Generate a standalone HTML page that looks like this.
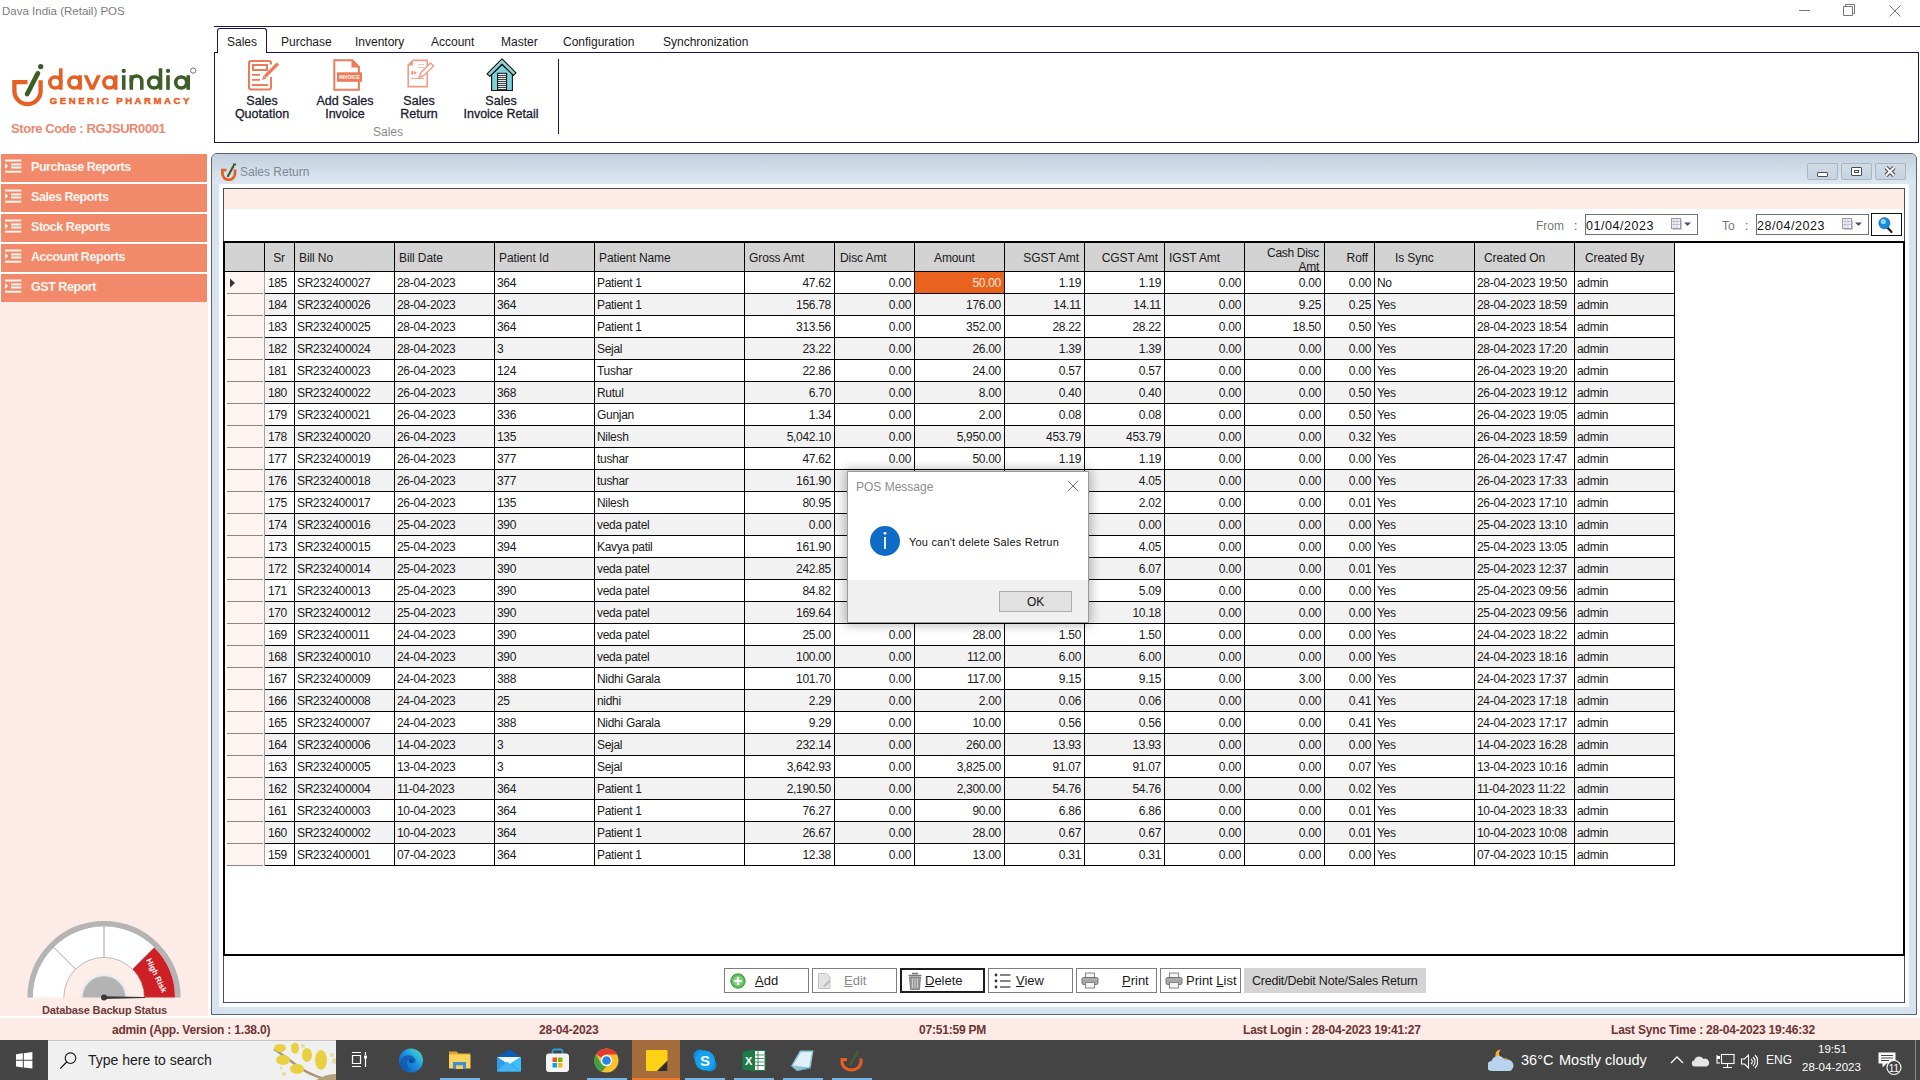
<!DOCTYPE html><html><head><meta charset="utf-8"><title>Dava India POS</title><style>*{margin:0;padding:0;box-sizing:border-box}
html,body{width:1920px;height:1080px;overflow:hidden;background:#fff;font-family:"Liberation Sans",sans-serif;color:#000;position:relative}
.a{position:absolute}
.t{position:absolute;white-space:nowrap;line-height:1;margin-left:-1px}
/* title bar */
#title{left:3px;top:6px;font-size:11.5px;color:#7c7c7c}
/* ribbon */
.nav{background:#16155a}
.tab{font-size:12px;color:#1a1a1a;top:36px}
.rbtxt{font-size:12.5px;color:#1b1b2e;text-align:center;line-height:13px;-webkit-text-stroke:0.3px #1b1b2e;letter-spacing:0px}
/* left menu */
.mbtn{left:1px;width:206px;height:28px;background:#f2896a}
.mbtn .lbl{position:absolute;left:30px;top:7px;font-size:12.5px;font-weight:bold;color:#fff6f0;white-space:nowrap;line-height:1;letter-spacing:-0.45px}
/* grid */
.g{position:absolute;margin-left:-1px;margin-right:-1px;font-size:12px;line-height:1;white-space:nowrap;color:#1a1a1a;letter-spacing:-0.3px}
</style></head><body>
<div class="t" id="title">Dava India (Retail) POS</div>
<div class="a" style="left:1799px;top:10px;width:11px;height:1px;background:#777"></div>
<svg class="a" style="left:1843px;top:4px" width="12" height="12" viewBox="0 0 12 12"><path d="M0.5 2.5h9v9h-9z M2.5 2.5v-2h9v9h-2" fill="none" stroke="#777" stroke-width="1"/></svg>
<svg class="a" style="left:1889px;top:5px" width="12" height="12" viewBox="0 0 12 12"><path d="M0.5 0.5L11.5 11.5M11.5 0.5L0.5 11.5" stroke="#777" stroke-width="1"/></svg>
<div class="a nav" style="left:214px;top:26px;width:1706px;height:1px"></div>
<div class="a" style="left:214px;top:52px;width:1705px;height:91px;border:1px solid #16155a;border-top:none"></div>
<div class="a nav" style="left:214px;top:52px;width:4px;height:1px"></div>
<div class="a nav" style="left:266px;top:52px;width:1653px;height:1px"></div>
<div class="a" style="left:217px;top:28px;width:50px;height:25px;border:1px solid #16155a;border-bottom:none;border-radius:3px 3px 0 0;background:#fff"></div>
<div class="t tab" style="left:228px">Sales</div>
<div class="t tab" style="left:282px">Purchase</div>
<div class="t tab" style="left:356px">Inventory</div>
<div class="t tab" style="left:432px">Account</div>
<div class="t tab" style="left:502px">Master</div>
<div class="t tab" style="left:564px">Configuration</div>
<div class="t tab" style="left:664px">Synchronization</div>
<div class="a nav" style="left:558px;top:59px;width:1px;height:75px"></div>
<div class="t" style="left:374px;top:126px;font-size:12px;color:#8a8a8a">Sales</div>
<svg class="a" style="left:244px;top:56px" width="40" height="38" viewBox="0 0 40 38">
<path d="M27 8.5V7a2 2 0 0 0-2-2H7a2 2 0 0 0-2 2v24.5a2 2 0 0 0 2 2h18a2 2 0 0 0 2-2V21" fill="none" stroke="#ee7b58" stroke-width="2"/>
<rect x="9" y="9" width="14" height="5" fill="none" stroke="#ee7b58" stroke-width="2"/>
<rect x="8" y="18" width="8" height="1.8" fill="#ee7b58"/><rect x="8" y="23" width="8" height="1.8" fill="#ee7b58"/><rect x="8" y="28" width="16" height="2" fill="#ee7b58"/>
<path d="M21 20.5L34 7.5" stroke="#ee7b58" stroke-width="3.2"/><path d="M18 24l1.5-4.5 3 3z" fill="#ee7b58"/>
</svg>
<svg class="a" style="left:328px;top:56px" width="40" height="38" viewBox="0 0 40 38">
<path d="M6.3 4.2H24.5L30.9 11V33.7H6.3Z" fill="none" stroke="#ee7b58" stroke-width="2"/>
<path d="M23.5 4 V11.5 H31.5Z" fill="#ee7b58"/>
<rect x="9" y="16.3" width="25" height="9.5" fill="#ee7b58"/>
<text x="11" y="23" font-size="5" font-family="Liberation Sans" font-weight="bold" fill="#fff" textLength="21" lengthAdjust="spacingAndGlyphs">INVOICE</text>
</svg>
<svg class="a" style="left:402px;top:56px" width="40" height="38" viewBox="0 0 40 38">
<path d="M25.2 17V30.6H6.2V9.2L11 4.4H25.2V9" fill="none" stroke="#f29a85" stroke-width="1.6"/>
<path d="M6.5 9.5H11V4.5Z" fill="#f29a85"/>
<path d="M17 21.5L19 16.5L28.5 7L31.5 10L22 19.5Z" fill="none" stroke="#f29a85" stroke-width="1.4"/>
<rect x="9.2" y="15" width="2.2" height="3.7" fill="#f29a85"/><path d="M12 15v3.7l3-1.85z" fill="#f29a85"/>
<rect x="9" y="21.8" width="13" height="1" fill="#f29a85"/>
<rect x="16" y="8" width="6" height="0.8" fill="#f29a85" opacity=".7"/><rect x="16" y="11" width="6" height="0.8" fill="#f29a85" opacity=".7"/>
</svg>
<svg class="a" style="left:482px;top:54px" width="40" height="40" viewBox="0 0 40 40">
<path d="M9.6 20.5V36.5H30.4V20L20 10.5Z" fill="#7fd0d8" stroke="#111" stroke-width="1.1"/>
<path d="M5 19.8L20 4.8L34 18.8L31.4 21.4L20 10.2L7.8 22.4Z" fill="#93d2d8" stroke="#111" stroke-width="1.1" stroke-linejoin="round"/>
<rect x="15.6" y="19.3" width="9" height="17" fill="#fff" stroke="#111" stroke-width="1"/>
<path d="M15.6 21.6H24.6M15.6 23.6H24.6M15.6 25.6H24.6M15.6 27.6H24.6M15.6 29.6H24.6M15.6 31.6H24.6M15.6 33.6H24.6M15.6 35.6H24.6" stroke="#111" stroke-width="0.9"/>
</svg>
<div class="a rbtxt" style="left:222px;top:95px;width:80px">Sales<br>Quotation</div>
<div class="a rbtxt" style="left:305px;top:95px;width:80px">Add Sales<br>Invoice</div>
<div class="a rbtxt" style="left:379px;top:95px;width:80px">Sales<br>Return</div>
<div class="a rbtxt" style="left:451px;top:95px;width:100px">Sales<br>Invoice Retail</div>
<svg class="a" style="left:0;top:55px" width="205" height="85" viewBox="0 55 205 85">
<g fill="none" stroke-width="3.6">
<path d="M12.3 82.1H27.5M14.4 80V91A13.1 13.1 0 0 0 40.6 91V80.3" stroke="#e65f25" stroke-width="4.3"/>
<path d="M27.2 94L37.8 73.4" stroke="#3e5e28" stroke-width="4.8" stroke-linecap="round"/>
<circle cx="55.3" cy="82.5" r="5.5" stroke="#e65f25"/><path d="M60.8 68.3V89.8" stroke="#e65f25"/>
<circle cx="74.4" cy="82.5" r="5.5" stroke="#e65f25"/><path d="M80.1 75.2V89.8" stroke="#e65f25"/>
<circle cx="109.4" cy="82.5" r="5.5" stroke="#e65f25"/><path d="M115.7 75.2V89.8" stroke="#e65f25"/>
<path d="M123.75 75.2V89.8" stroke="#3e5e28"/>
<path d="M131.3 89.8V81.2A5.25 5.25 0 0 1 141.8 81.2V89.8" stroke="#3e5e28"/><path d="M131.3 75.2V82" stroke="#3e5e28"/>
<circle cx="154.1" cy="82.5" r="5.5" stroke="#3e5e28"/><path d="M160.5 68.3V89.8" stroke="#3e5e28"/>
<path d="M168 75.2V89.8" stroke="#3e5e28"/>
<circle cx="181.2" cy="82.5" r="5.5" stroke="#3e5e28"/><path d="M188.2 75.2V89.8" stroke="#3e5e28"/>
<circle cx="193.2" cy="70.6" r="2.6" stroke="#555" stroke-width="0.8"/>
</g>
<path d="M83.6 75.2H87.6L92.2 85.6L96.8 75.2H100.8L94.2 89.8H90.2Z" fill="#e65f25"/>
<circle cx="40.7" cy="66.6" r="2.7" fill="#3e5e28"/>
<circle cx="123.75" cy="70.9" r="2.1" fill="#3e5e28"/><circle cx="168" cy="70.9" r="2.1" fill="#3e5e28"/>
<text x="49.8" y="103.6" font-family="Liberation Sans" font-weight="bold" font-size="9.6" fill="#e65f25" stroke="#e65f25" stroke-width="0.45" textLength="139.5" lengthAdjust="spacing">GENERIC PHARMACY</text>
</svg>
<div class="t" style="left:12px;top:122px;font-size:13px;font-weight:bold;color:#ea8870;letter-spacing:-0.42px">Store Code : RGJSUR0001</div>
<div class="a" style="left:0;top:302px;width:208px;height:714px;background:#fdebe7"></div>
<div class="a mbtn" style="top:154px"><svg class="a" style="left:2px;top:5px" width="20" height="15" viewBox="0 0 20 15"><g fill="#fff4ee"><rect x="2" y="0.5" width="16.3" height="2"/><rect x="8" y="4.4" width="10.3" height="2"/><rect x="8" y="7.5" width="10.3" height="2"/><rect x="2" y="11.7" width="16.3" height="2"/><path d="M2 4L5.2 7 2 10z"/></g></svg><div class="lbl">Purchase Reports</div></div>
<div class="a mbtn" style="top:184px"><svg class="a" style="left:2px;top:5px" width="20" height="15" viewBox="0 0 20 15"><g fill="#fff4ee"><rect x="2" y="0.5" width="16.3" height="2"/><rect x="8" y="4.4" width="10.3" height="2"/><rect x="8" y="7.5" width="10.3" height="2"/><rect x="2" y="11.7" width="16.3" height="2"/><path d="M2 4L5.2 7 2 10z"/></g></svg><div class="lbl">Sales Reports</div></div>
<div class="a mbtn" style="top:214px"><svg class="a" style="left:2px;top:5px" width="20" height="15" viewBox="0 0 20 15"><g fill="#fff4ee"><rect x="2" y="0.5" width="16.3" height="2"/><rect x="8" y="4.4" width="10.3" height="2"/><rect x="8" y="7.5" width="10.3" height="2"/><rect x="2" y="11.7" width="16.3" height="2"/><path d="M2 4L5.2 7 2 10z"/></g></svg><div class="lbl">Stock Reports</div></div>
<div class="a mbtn" style="top:244px"><svg class="a" style="left:2px;top:5px" width="20" height="15" viewBox="0 0 20 15"><g fill="#fff4ee"><rect x="2" y="0.5" width="16.3" height="2"/><rect x="8" y="4.4" width="10.3" height="2"/><rect x="8" y="7.5" width="10.3" height="2"/><rect x="2" y="11.7" width="16.3" height="2"/><path d="M2 4L5.2 7 2 10z"/></g></svg><div class="lbl">Account Reports</div></div>
<div class="a mbtn" style="top:274px"><svg class="a" style="left:2px;top:5px" width="20" height="15" viewBox="0 0 20 15"><g fill="#fff4ee"><rect x="2" y="0.5" width="16.3" height="2"/><rect x="8" y="4.4" width="10.3" height="2"/><rect x="8" y="7.5" width="10.3" height="2"/><rect x="2" y="11.7" width="16.3" height="2"/><path d="M2 4L5.2 7 2 10z"/></g></svg><div class="lbl">GST Report</div></div>
<div class="a" style="left:211px;top:153px;width:1706px;height:862px;border:1px solid #5d6268;border-radius:6px 6px 0 0;background:#d7e3ef"></div>
<div class="a" style="left:212px;top:154px;width:1704px;height:30px;border-radius:5px 5px 0 0;background:linear-gradient(#c3cfdc,#d3dfeb 60%,#dbe6f1)"></div>
<div class="a" style="left:219px;top:184px;width:1690px;height:823px;background:#fbfdff"></div>
<svg class="a" style="left:219px;top:161px" width="20" height="20" viewBox="0 0 20 20">
<path d="M2 9.2H7.5M3.4 8.5V12.5A6.3 6.3 0 0 0 16 12.5V8.5" fill="none" stroke="#e65f25" stroke-width="2.8"/>
<path d="M9 15L14.5 5" stroke="#3e5e28" stroke-width="2.2" stroke-linecap="round"/><rect x="14" y="2.5" width="3" height="2" fill="#3e5e28"/>
</svg>
<div class="t" style="left:241px;top:166px;font-size:12px;color:#7d8894">Sales Return</div>
<div class="a" style="left:1807px;top:163px;width:31px;height:17px;border:1px solid #a9b6c4;border-radius:2px;background:linear-gradient(#d0dbe6,#c6d3df)"></div>
<div class="a" style="left:1841px;top:163px;width:31px;height:17px;border:1px solid #a9b6c4;border-radius:2px;background:linear-gradient(#d0dbe6,#c6d3df)"></div>
<div class="a" style="left:1875px;top:163px;width:31px;height:17px;border:1px solid #a9b6c4;border-radius:2px;background:linear-gradient(#d0dbe6,#c6d3df)"></div>
<div class="a" style="left:1817px;top:172px;width:11px;height:5px;border:1px solid #4a4f55;border-radius:1px;background:#fff"></div>
<div class="a" style="left:1851px;top:167px;width:11px;height:9px;border:1px solid #4a4f55;border-radius:1px;background:#fff"><div class="a" style="left:2px;top:2px;width:5px;height:3px;border:1px solid #4a4f55;background:#fff"></div></div>
<svg class="a" style="left:1884px;top:166px" width="12" height="11" viewBox="0 0 12 11"><path d="M2 1.5L10 9.5M10 1.5L2 9.5" stroke="#4a4f55" stroke-width="4.2"/><path d="M2 1.5L10 9.5M10 1.5L2 9.5" stroke="#fff" stroke-width="2"/></svg>
<div class="a" style="left:223px;top:188px;width:1682px;height:815px;border:1px solid #4e4e4e;background:#fff"></div>
<div class="a" style="left:224px;top:189px;width:1680px;height:20px;background:#fdebe7"></div>
<div class="t" style="left:1537px;top:220px;font-size:12px;color:#777">From</div>
<div class="t" style="left:1575px;top:220px;font-size:12px;color:#555">:</div>
<div class="t" style="left:1723px;top:220px;font-size:12px;color:#777">To</div>
<div class="t" style="left:1746px;top:220px;font-size:12px;color:#555">:</div>
<div class="a" style="left:1585px;top:214px;width:113px;height:21px;border:1px solid #707070;background:#fff"></div>
<div class="t" style="left:1587px;top:220px;font-size:12.5px;color:#111;letter-spacing:0.55px">01/04/2023</div>
<svg class="a" style="left:1671px;top:217px" width="24" height="14" viewBox="0 0 24 14"><rect x="0.5" y="1.5" width="9" height="10" fill="#f4f4f8" stroke="#9a9aa8"/><path d="M3 2v9M6 2v9M1 4.5h8M1 7.5h8" stroke="#b8b8c6" stroke-width="0.8"/><path d="M2 12.5h8.5V3" fill="none" stroke="#c9c9d2"/><path d="M13 5.5h7l-3.5 3.5z" fill="#46556a"/></svg>
<div class="a" style="left:1756px;top:214px;width:113px;height:21px;border:1px solid #707070;background:#fff"></div>
<div class="t" style="left:1758px;top:220px;font-size:12.5px;color:#111;letter-spacing:0.55px">28/04/2023</div>
<svg class="a" style="left:1842px;top:217px" width="24" height="14" viewBox="0 0 24 14"><rect x="0.5" y="1.5" width="9" height="10" fill="#f4f4f8" stroke="#9a9aa8"/><path d="M3 2v9M6 2v9M1 4.5h8M1 7.5h8" stroke="#b8b8c6" stroke-width="0.8"/><path d="M2 12.5h8.5V3" fill="none" stroke="#c9c9d2"/><path d="M13 5.5h7l-3.5 3.5z" fill="#46556a"/></svg>
<div class="a" style="left:1871px;top:213px;width:31px;height:23px;border:1px solid #111;background:#fff"></div>
<svg class="a" style="left:1876px;top:216px" width="20" height="18" viewBox="0 0 20 18"><path d="M10 10L15.5 16" stroke="#222" stroke-width="2.2" stroke-linecap="round"/><circle cx="8.4" cy="7.2" r="5.6" fill="#1a8ad8"/><circle cx="7.3" cy="5.6" r="2.6" fill="#8fd3ff"/><circle cx="8.4" cy="7.2" r="5.6" fill="none" stroke="#0b5ea8" stroke-width="0.6"/></svg>
<div class="a" style="left:223px;top:241px;width:1682px;height:715px;border:2px solid #000;background:#fff"></div>
<div class="a" style="left:225px;top:243px;width:1449px;height:28px;background:#d3d3d3"></div>
<div class="a" style="left:225px;top:271px;width:1450px;height:1px;background:#000"></div>
<div class="a" style="left:225px;top:272px;width:39px;height:594px;background:#fdf4f1"></div>
<div class="a" style="left:265px;top:294px;width:1409px;height:21px;background:#f2f2f2"></div>
<div class="a" style="left:265px;top:338px;width:1409px;height:21px;background:#f2f2f2"></div>
<div class="a" style="left:265px;top:382px;width:1409px;height:21px;background:#f2f2f2"></div>
<div class="a" style="left:265px;top:426px;width:1409px;height:21px;background:#f2f2f2"></div>
<div class="a" style="left:265px;top:470px;width:1409px;height:21px;background:#f2f2f2"></div>
<div class="a" style="left:265px;top:514px;width:1409px;height:21px;background:#f2f2f2"></div>
<div class="a" style="left:265px;top:558px;width:1409px;height:21px;background:#f2f2f2"></div>
<div class="a" style="left:265px;top:602px;width:1409px;height:21px;background:#f2f2f2"></div>
<div class="a" style="left:265px;top:646px;width:1409px;height:21px;background:#f2f2f2"></div>
<div class="a" style="left:265px;top:690px;width:1409px;height:21px;background:#f2f2f2"></div>
<div class="a" style="left:265px;top:734px;width:1409px;height:21px;background:#f2f2f2"></div>
<div class="a" style="left:265px;top:778px;width:1409px;height:21px;background:#f2f2f2"></div>
<div class="a" style="left:265px;top:822px;width:1409px;height:21px;background:#f2f2f2"></div>
<div class="a" style="left:915px;top:272px;width:89px;height:21px;background:#e9631f"></div>
<div class="a" style="left:264px;top:293px;width:1411px;height:1px;background:#000"></div>
<div class="a" style="left:227px;top:293px;width:36px;height:1px;background:#8f8585"></div>
<div class="a" style="left:264px;top:315px;width:1411px;height:1px;background:#000"></div>
<div class="a" style="left:227px;top:315px;width:36px;height:1px;background:#8f8585"></div>
<div class="a" style="left:264px;top:337px;width:1411px;height:1px;background:#000"></div>
<div class="a" style="left:227px;top:337px;width:36px;height:1px;background:#8f8585"></div>
<div class="a" style="left:264px;top:359px;width:1411px;height:1px;background:#000"></div>
<div class="a" style="left:227px;top:359px;width:36px;height:1px;background:#8f8585"></div>
<div class="a" style="left:264px;top:381px;width:1411px;height:1px;background:#000"></div>
<div class="a" style="left:227px;top:381px;width:36px;height:1px;background:#8f8585"></div>
<div class="a" style="left:264px;top:403px;width:1411px;height:1px;background:#000"></div>
<div class="a" style="left:227px;top:403px;width:36px;height:1px;background:#8f8585"></div>
<div class="a" style="left:264px;top:425px;width:1411px;height:1px;background:#000"></div>
<div class="a" style="left:227px;top:425px;width:36px;height:1px;background:#8f8585"></div>
<div class="a" style="left:264px;top:447px;width:1411px;height:1px;background:#000"></div>
<div class="a" style="left:227px;top:447px;width:36px;height:1px;background:#8f8585"></div>
<div class="a" style="left:264px;top:469px;width:1411px;height:1px;background:#000"></div>
<div class="a" style="left:227px;top:469px;width:36px;height:1px;background:#8f8585"></div>
<div class="a" style="left:264px;top:491px;width:1411px;height:1px;background:#000"></div>
<div class="a" style="left:227px;top:491px;width:36px;height:1px;background:#8f8585"></div>
<div class="a" style="left:264px;top:513px;width:1411px;height:1px;background:#000"></div>
<div class="a" style="left:227px;top:513px;width:36px;height:1px;background:#8f8585"></div>
<div class="a" style="left:264px;top:535px;width:1411px;height:1px;background:#000"></div>
<div class="a" style="left:227px;top:535px;width:36px;height:1px;background:#8f8585"></div>
<div class="a" style="left:264px;top:557px;width:1411px;height:1px;background:#000"></div>
<div class="a" style="left:227px;top:557px;width:36px;height:1px;background:#8f8585"></div>
<div class="a" style="left:264px;top:579px;width:1411px;height:1px;background:#000"></div>
<div class="a" style="left:227px;top:579px;width:36px;height:1px;background:#8f8585"></div>
<div class="a" style="left:264px;top:601px;width:1411px;height:1px;background:#000"></div>
<div class="a" style="left:227px;top:601px;width:36px;height:1px;background:#8f8585"></div>
<div class="a" style="left:264px;top:623px;width:1411px;height:1px;background:#000"></div>
<div class="a" style="left:227px;top:623px;width:36px;height:1px;background:#8f8585"></div>
<div class="a" style="left:264px;top:645px;width:1411px;height:1px;background:#000"></div>
<div class="a" style="left:227px;top:645px;width:36px;height:1px;background:#8f8585"></div>
<div class="a" style="left:264px;top:667px;width:1411px;height:1px;background:#000"></div>
<div class="a" style="left:227px;top:667px;width:36px;height:1px;background:#8f8585"></div>
<div class="a" style="left:264px;top:689px;width:1411px;height:1px;background:#000"></div>
<div class="a" style="left:227px;top:689px;width:36px;height:1px;background:#8f8585"></div>
<div class="a" style="left:264px;top:711px;width:1411px;height:1px;background:#000"></div>
<div class="a" style="left:227px;top:711px;width:36px;height:1px;background:#8f8585"></div>
<div class="a" style="left:264px;top:733px;width:1411px;height:1px;background:#000"></div>
<div class="a" style="left:227px;top:733px;width:36px;height:1px;background:#8f8585"></div>
<div class="a" style="left:264px;top:755px;width:1411px;height:1px;background:#000"></div>
<div class="a" style="left:227px;top:755px;width:36px;height:1px;background:#8f8585"></div>
<div class="a" style="left:264px;top:777px;width:1411px;height:1px;background:#000"></div>
<div class="a" style="left:227px;top:777px;width:36px;height:1px;background:#8f8585"></div>
<div class="a" style="left:264px;top:799px;width:1411px;height:1px;background:#000"></div>
<div class="a" style="left:227px;top:799px;width:36px;height:1px;background:#8f8585"></div>
<div class="a" style="left:264px;top:821px;width:1411px;height:1px;background:#000"></div>
<div class="a" style="left:227px;top:821px;width:36px;height:1px;background:#8f8585"></div>
<div class="a" style="left:264px;top:843px;width:1411px;height:1px;background:#000"></div>
<div class="a" style="left:227px;top:843px;width:36px;height:1px;background:#8f8585"></div>
<div class="a" style="left:264px;top:865px;width:1411px;height:1px;background:#000"></div>
<div class="a" style="left:227px;top:865px;width:36px;height:1px;background:#8f8585"></div>
<div class="a" style="left:264px;top:243px;width:1px;height:28px;background:#000"></div>
<div class="a" style="left:264px;top:272px;width:1px;height:594px;background:#a8a0a0"></div>
<div class="a" style="left:294px;top:243px;width:1px;height:623px;background:#000"></div>
<div class="a" style="left:394px;top:243px;width:1px;height:623px;background:#000"></div>
<div class="a" style="left:494px;top:243px;width:1px;height:623px;background:#000"></div>
<div class="a" style="left:594px;top:243px;width:1px;height:623px;background:#000"></div>
<div class="a" style="left:744px;top:243px;width:1px;height:623px;background:#000"></div>
<div class="a" style="left:834px;top:243px;width:1px;height:623px;background:#000"></div>
<div class="a" style="left:914px;top:243px;width:1px;height:623px;background:#000"></div>
<div class="a" style="left:1004px;top:243px;width:1px;height:623px;background:#000"></div>
<div class="a" style="left:1084px;top:243px;width:1px;height:623px;background:#000"></div>
<div class="a" style="left:1164px;top:243px;width:1px;height:623px;background:#000"></div>
<div class="a" style="left:1244px;top:243px;width:1px;height:623px;background:#000"></div>
<div class="a" style="left:1324px;top:243px;width:1px;height:623px;background:#000"></div>
<div class="a" style="left:1374px;top:243px;width:1px;height:623px;background:#000"></div>
<div class="a" style="left:1474px;top:243px;width:1px;height:623px;background:#000"></div>
<div class="a" style="left:1574px;top:243px;width:1px;height:623px;background:#000"></div>
<div class="a" style="left:1674px;top:243px;width:1px;height:623px;background:#000"></div>
<svg class="a" style="left:229px;top:277px" width="8" height="12" viewBox="0 0 8 12"><path d="M1 1.5L6 6 1 10.5z" fill="#333"/></svg>
<div class="g" style="right:1634px;top:277px;color:#1a1a1a">185</div>
<div class="g" style="left:298px;top:277px">SR232400027</div>
<div class="g" style="left:398px;top:277px">28-04-2023</div>
<div class="g" style="left:498px;top:277px">364</div>
<div class="g" style="left:598px;top:277px">Patient 1</div>
<div class="g" style="right:1090px;top:277px;color:#1a1a1a">47.62</div>
<div class="g" style="right:1010px;top:277px;color:#1a1a1a">0.00</div>
<div class="g" style="right:920px;top:277px;color:#fde6d6">50.00</div>
<div class="g" style="right:840px;top:277px;color:#1a1a1a">1.19</div>
<div class="g" style="right:760px;top:277px;color:#1a1a1a">1.19</div>
<div class="g" style="right:680px;top:277px;color:#1a1a1a">0.00</div>
<div class="g" style="right:600px;top:277px;color:#1a1a1a">0.00</div>
<div class="g" style="right:550px;top:277px;color:#1a1a1a">0.00</div>
<div class="g" style="left:1378px;top:277px">No</div>
<div class="g" style="left:1478px;top:277px">28-04-2023 19:50</div>
<div class="g" style="left:1578px;top:277px">admin</div>
<div class="g" style="right:1634px;top:299px;color:#1a1a1a">184</div>
<div class="g" style="left:298px;top:299px">SR232400026</div>
<div class="g" style="left:398px;top:299px">28-04-2023</div>
<div class="g" style="left:498px;top:299px">364</div>
<div class="g" style="left:598px;top:299px">Patient 1</div>
<div class="g" style="right:1090px;top:299px;color:#1a1a1a">156.78</div>
<div class="g" style="right:1010px;top:299px;color:#1a1a1a">0.00</div>
<div class="g" style="right:920px;top:299px;color:#1a1a1a">176.00</div>
<div class="g" style="right:840px;top:299px;color:#1a1a1a">14.11</div>
<div class="g" style="right:760px;top:299px;color:#1a1a1a">14.11</div>
<div class="g" style="right:680px;top:299px;color:#1a1a1a">0.00</div>
<div class="g" style="right:600px;top:299px;color:#1a1a1a">9.25</div>
<div class="g" style="right:550px;top:299px;color:#1a1a1a">0.25</div>
<div class="g" style="left:1378px;top:299px">Yes</div>
<div class="g" style="left:1478px;top:299px">28-04-2023 18:59</div>
<div class="g" style="left:1578px;top:299px">admin</div>
<div class="g" style="right:1634px;top:321px;color:#1a1a1a">183</div>
<div class="g" style="left:298px;top:321px">SR232400025</div>
<div class="g" style="left:398px;top:321px">28-04-2023</div>
<div class="g" style="left:498px;top:321px">364</div>
<div class="g" style="left:598px;top:321px">Patient 1</div>
<div class="g" style="right:1090px;top:321px;color:#1a1a1a">313.56</div>
<div class="g" style="right:1010px;top:321px;color:#1a1a1a">0.00</div>
<div class="g" style="right:920px;top:321px;color:#1a1a1a">352.00</div>
<div class="g" style="right:840px;top:321px;color:#1a1a1a">28.22</div>
<div class="g" style="right:760px;top:321px;color:#1a1a1a">28.22</div>
<div class="g" style="right:680px;top:321px;color:#1a1a1a">0.00</div>
<div class="g" style="right:600px;top:321px;color:#1a1a1a">18.50</div>
<div class="g" style="right:550px;top:321px;color:#1a1a1a">0.50</div>
<div class="g" style="left:1378px;top:321px">Yes</div>
<div class="g" style="left:1478px;top:321px">28-04-2023 18:54</div>
<div class="g" style="left:1578px;top:321px">admin</div>
<div class="g" style="right:1634px;top:343px;color:#1a1a1a">182</div>
<div class="g" style="left:298px;top:343px">SR232400024</div>
<div class="g" style="left:398px;top:343px">28-04-2023</div>
<div class="g" style="left:498px;top:343px">3</div>
<div class="g" style="left:598px;top:343px">Sejal</div>
<div class="g" style="right:1090px;top:343px;color:#1a1a1a">23.22</div>
<div class="g" style="right:1010px;top:343px;color:#1a1a1a">0.00</div>
<div class="g" style="right:920px;top:343px;color:#1a1a1a">26.00</div>
<div class="g" style="right:840px;top:343px;color:#1a1a1a">1.39</div>
<div class="g" style="right:760px;top:343px;color:#1a1a1a">1.39</div>
<div class="g" style="right:680px;top:343px;color:#1a1a1a">0.00</div>
<div class="g" style="right:600px;top:343px;color:#1a1a1a">0.00</div>
<div class="g" style="right:550px;top:343px;color:#1a1a1a">0.00</div>
<div class="g" style="left:1378px;top:343px">Yes</div>
<div class="g" style="left:1478px;top:343px">28-04-2023 17:20</div>
<div class="g" style="left:1578px;top:343px">admin</div>
<div class="g" style="right:1634px;top:365px;color:#1a1a1a">181</div>
<div class="g" style="left:298px;top:365px">SR232400023</div>
<div class="g" style="left:398px;top:365px">26-04-2023</div>
<div class="g" style="left:498px;top:365px">124</div>
<div class="g" style="left:598px;top:365px">Tushar</div>
<div class="g" style="right:1090px;top:365px;color:#1a1a1a">22.86</div>
<div class="g" style="right:1010px;top:365px;color:#1a1a1a">0.00</div>
<div class="g" style="right:920px;top:365px;color:#1a1a1a">24.00</div>
<div class="g" style="right:840px;top:365px;color:#1a1a1a">0.57</div>
<div class="g" style="right:760px;top:365px;color:#1a1a1a">0.57</div>
<div class="g" style="right:680px;top:365px;color:#1a1a1a">0.00</div>
<div class="g" style="right:600px;top:365px;color:#1a1a1a">0.00</div>
<div class="g" style="right:550px;top:365px;color:#1a1a1a">0.00</div>
<div class="g" style="left:1378px;top:365px">Yes</div>
<div class="g" style="left:1478px;top:365px">26-04-2023 19:20</div>
<div class="g" style="left:1578px;top:365px">admin</div>
<div class="g" style="right:1634px;top:387px;color:#1a1a1a">180</div>
<div class="g" style="left:298px;top:387px">SR232400022</div>
<div class="g" style="left:398px;top:387px">26-04-2023</div>
<div class="g" style="left:498px;top:387px">368</div>
<div class="g" style="left:598px;top:387px">Rutul</div>
<div class="g" style="right:1090px;top:387px;color:#1a1a1a">6.70</div>
<div class="g" style="right:1010px;top:387px;color:#1a1a1a">0.00</div>
<div class="g" style="right:920px;top:387px;color:#1a1a1a">8.00</div>
<div class="g" style="right:840px;top:387px;color:#1a1a1a">0.40</div>
<div class="g" style="right:760px;top:387px;color:#1a1a1a">0.40</div>
<div class="g" style="right:680px;top:387px;color:#1a1a1a">0.00</div>
<div class="g" style="right:600px;top:387px;color:#1a1a1a">0.00</div>
<div class="g" style="right:550px;top:387px;color:#1a1a1a">0.50</div>
<div class="g" style="left:1378px;top:387px">Yes</div>
<div class="g" style="left:1478px;top:387px">26-04-2023 19:12</div>
<div class="g" style="left:1578px;top:387px">admin</div>
<div class="g" style="right:1634px;top:409px;color:#1a1a1a">179</div>
<div class="g" style="left:298px;top:409px">SR232400021</div>
<div class="g" style="left:398px;top:409px">26-04-2023</div>
<div class="g" style="left:498px;top:409px">336</div>
<div class="g" style="left:598px;top:409px">Gunjan</div>
<div class="g" style="right:1090px;top:409px;color:#1a1a1a">1.34</div>
<div class="g" style="right:1010px;top:409px;color:#1a1a1a">0.00</div>
<div class="g" style="right:920px;top:409px;color:#1a1a1a">2.00</div>
<div class="g" style="right:840px;top:409px;color:#1a1a1a">0.08</div>
<div class="g" style="right:760px;top:409px;color:#1a1a1a">0.08</div>
<div class="g" style="right:680px;top:409px;color:#1a1a1a">0.00</div>
<div class="g" style="right:600px;top:409px;color:#1a1a1a">0.00</div>
<div class="g" style="right:550px;top:409px;color:#1a1a1a">0.50</div>
<div class="g" style="left:1378px;top:409px">Yes</div>
<div class="g" style="left:1478px;top:409px">26-04-2023 19:05</div>
<div class="g" style="left:1578px;top:409px">admin</div>
<div class="g" style="right:1634px;top:431px;color:#1a1a1a">178</div>
<div class="g" style="left:298px;top:431px">SR232400020</div>
<div class="g" style="left:398px;top:431px">26-04-2023</div>
<div class="g" style="left:498px;top:431px">135</div>
<div class="g" style="left:598px;top:431px">Nilesh</div>
<div class="g" style="right:1090px;top:431px;color:#1a1a1a">5,042.10</div>
<div class="g" style="right:1010px;top:431px;color:#1a1a1a">0.00</div>
<div class="g" style="right:920px;top:431px;color:#1a1a1a">5,950.00</div>
<div class="g" style="right:840px;top:431px;color:#1a1a1a">453.79</div>
<div class="g" style="right:760px;top:431px;color:#1a1a1a">453.79</div>
<div class="g" style="right:680px;top:431px;color:#1a1a1a">0.00</div>
<div class="g" style="right:600px;top:431px;color:#1a1a1a">0.00</div>
<div class="g" style="right:550px;top:431px;color:#1a1a1a">0.32</div>
<div class="g" style="left:1378px;top:431px">Yes</div>
<div class="g" style="left:1478px;top:431px">26-04-2023 18:59</div>
<div class="g" style="left:1578px;top:431px">admin</div>
<div class="g" style="right:1634px;top:453px;color:#1a1a1a">177</div>
<div class="g" style="left:298px;top:453px">SR232400019</div>
<div class="g" style="left:398px;top:453px">26-04-2023</div>
<div class="g" style="left:498px;top:453px">377</div>
<div class="g" style="left:598px;top:453px">tushar</div>
<div class="g" style="right:1090px;top:453px;color:#1a1a1a">47.62</div>
<div class="g" style="right:1010px;top:453px;color:#1a1a1a">0.00</div>
<div class="g" style="right:920px;top:453px;color:#1a1a1a">50.00</div>
<div class="g" style="right:840px;top:453px;color:#1a1a1a">1.19</div>
<div class="g" style="right:760px;top:453px;color:#1a1a1a">1.19</div>
<div class="g" style="right:680px;top:453px;color:#1a1a1a">0.00</div>
<div class="g" style="right:600px;top:453px;color:#1a1a1a">0.00</div>
<div class="g" style="right:550px;top:453px;color:#1a1a1a">0.00</div>
<div class="g" style="left:1378px;top:453px">Yes</div>
<div class="g" style="left:1478px;top:453px">26-04-2023 17:47</div>
<div class="g" style="left:1578px;top:453px">admin</div>
<div class="g" style="right:1634px;top:475px;color:#1a1a1a">176</div>
<div class="g" style="left:298px;top:475px">SR232400018</div>
<div class="g" style="left:398px;top:475px">26-04-2023</div>
<div class="g" style="left:498px;top:475px">377</div>
<div class="g" style="left:598px;top:475px">tushar</div>
<div class="g" style="right:1090px;top:475px;color:#1a1a1a">161.90</div>
<div class="g" style="right:1010px;top:475px;color:#1a1a1a">0.00</div>
<div class="g" style="right:920px;top:475px;color:#1a1a1a">170.00</div>
<div class="g" style="right:840px;top:475px;color:#1a1a1a">4.05</div>
<div class="g" style="right:760px;top:475px;color:#1a1a1a">4.05</div>
<div class="g" style="right:680px;top:475px;color:#1a1a1a">0.00</div>
<div class="g" style="right:600px;top:475px;color:#1a1a1a">0.00</div>
<div class="g" style="right:550px;top:475px;color:#1a1a1a">0.00</div>
<div class="g" style="left:1378px;top:475px">Yes</div>
<div class="g" style="left:1478px;top:475px">26-04-2023 17:33</div>
<div class="g" style="left:1578px;top:475px">admin</div>
<div class="g" style="right:1634px;top:497px;color:#1a1a1a">175</div>
<div class="g" style="left:298px;top:497px">SR232400017</div>
<div class="g" style="left:398px;top:497px">26-04-2023</div>
<div class="g" style="left:498px;top:497px">135</div>
<div class="g" style="left:598px;top:497px">Nilesh</div>
<div class="g" style="right:1090px;top:497px;color:#1a1a1a">80.95</div>
<div class="g" style="right:1010px;top:497px;color:#1a1a1a">0.00</div>
<div class="g" style="right:920px;top:497px;color:#1a1a1a">85.00</div>
<div class="g" style="right:840px;top:497px;color:#1a1a1a">2.02</div>
<div class="g" style="right:760px;top:497px;color:#1a1a1a">2.02</div>
<div class="g" style="right:680px;top:497px;color:#1a1a1a">0.00</div>
<div class="g" style="right:600px;top:497px;color:#1a1a1a">0.00</div>
<div class="g" style="right:550px;top:497px;color:#1a1a1a">0.01</div>
<div class="g" style="left:1378px;top:497px">Yes</div>
<div class="g" style="left:1478px;top:497px">26-04-2023 17:10</div>
<div class="g" style="left:1578px;top:497px">admin</div>
<div class="g" style="right:1634px;top:519px;color:#1a1a1a">174</div>
<div class="g" style="left:298px;top:519px">SR232400016</div>
<div class="g" style="left:398px;top:519px">25-04-2023</div>
<div class="g" style="left:498px;top:519px">390</div>
<div class="g" style="left:598px;top:519px">veda patel</div>
<div class="g" style="right:1090px;top:519px;color:#1a1a1a">0.00</div>
<div class="g" style="right:1010px;top:519px;color:#1a1a1a">0.00</div>
<div class="g" style="right:920px;top:519px;color:#1a1a1a">0.00</div>
<div class="g" style="right:840px;top:519px;color:#1a1a1a">0.00</div>
<div class="g" style="right:760px;top:519px;color:#1a1a1a">0.00</div>
<div class="g" style="right:680px;top:519px;color:#1a1a1a">0.00</div>
<div class="g" style="right:600px;top:519px;color:#1a1a1a">0.00</div>
<div class="g" style="right:550px;top:519px;color:#1a1a1a">0.00</div>
<div class="g" style="left:1378px;top:519px">Yes</div>
<div class="g" style="left:1478px;top:519px">25-04-2023 13:10</div>
<div class="g" style="left:1578px;top:519px">admin</div>
<div class="g" style="right:1634px;top:541px;color:#1a1a1a">173</div>
<div class="g" style="left:298px;top:541px">SR232400015</div>
<div class="g" style="left:398px;top:541px">25-04-2023</div>
<div class="g" style="left:498px;top:541px">394</div>
<div class="g" style="left:598px;top:541px">Kavya patil</div>
<div class="g" style="right:1090px;top:541px;color:#1a1a1a">161.90</div>
<div class="g" style="right:1010px;top:541px;color:#1a1a1a">0.00</div>
<div class="g" style="right:920px;top:541px;color:#1a1a1a">170.00</div>
<div class="g" style="right:840px;top:541px;color:#1a1a1a">4.05</div>
<div class="g" style="right:760px;top:541px;color:#1a1a1a">4.05</div>
<div class="g" style="right:680px;top:541px;color:#1a1a1a">0.00</div>
<div class="g" style="right:600px;top:541px;color:#1a1a1a">0.00</div>
<div class="g" style="right:550px;top:541px;color:#1a1a1a">0.00</div>
<div class="g" style="left:1378px;top:541px">Yes</div>
<div class="g" style="left:1478px;top:541px">25-04-2023 13:05</div>
<div class="g" style="left:1578px;top:541px">admin</div>
<div class="g" style="right:1634px;top:563px;color:#1a1a1a">172</div>
<div class="g" style="left:298px;top:563px">SR232400014</div>
<div class="g" style="left:398px;top:563px">25-04-2023</div>
<div class="g" style="left:498px;top:563px">390</div>
<div class="g" style="left:598px;top:563px">veda patel</div>
<div class="g" style="right:1090px;top:563px;color:#1a1a1a">242.85</div>
<div class="g" style="right:1010px;top:563px;color:#1a1a1a">0.00</div>
<div class="g" style="right:920px;top:563px;color:#1a1a1a">255.00</div>
<div class="g" style="right:840px;top:563px;color:#1a1a1a">6.07</div>
<div class="g" style="right:760px;top:563px;color:#1a1a1a">6.07</div>
<div class="g" style="right:680px;top:563px;color:#1a1a1a">0.00</div>
<div class="g" style="right:600px;top:563px;color:#1a1a1a">0.00</div>
<div class="g" style="right:550px;top:563px;color:#1a1a1a">0.01</div>
<div class="g" style="left:1378px;top:563px">Yes</div>
<div class="g" style="left:1478px;top:563px">25-04-2023 12:37</div>
<div class="g" style="left:1578px;top:563px">admin</div>
<div class="g" style="right:1634px;top:585px;color:#1a1a1a">171</div>
<div class="g" style="left:298px;top:585px">SR232400013</div>
<div class="g" style="left:398px;top:585px">25-04-2023</div>
<div class="g" style="left:498px;top:585px">390</div>
<div class="g" style="left:598px;top:585px">veda patel</div>
<div class="g" style="right:1090px;top:585px;color:#1a1a1a">84.82</div>
<div class="g" style="right:1010px;top:585px;color:#1a1a1a">0.00</div>
<div class="g" style="right:920px;top:585px;color:#1a1a1a">95.00</div>
<div class="g" style="right:840px;top:585px;color:#1a1a1a">5.09</div>
<div class="g" style="right:760px;top:585px;color:#1a1a1a">5.09</div>
<div class="g" style="right:680px;top:585px;color:#1a1a1a">0.00</div>
<div class="g" style="right:600px;top:585px;color:#1a1a1a">0.00</div>
<div class="g" style="right:550px;top:585px;color:#1a1a1a">0.00</div>
<div class="g" style="left:1378px;top:585px">Yes</div>
<div class="g" style="left:1478px;top:585px">25-04-2023 09:56</div>
<div class="g" style="left:1578px;top:585px">admin</div>
<div class="g" style="right:1634px;top:607px;color:#1a1a1a">170</div>
<div class="g" style="left:298px;top:607px">SR232400012</div>
<div class="g" style="left:398px;top:607px">25-04-2023</div>
<div class="g" style="left:498px;top:607px">390</div>
<div class="g" style="left:598px;top:607px">veda patel</div>
<div class="g" style="right:1090px;top:607px;color:#1a1a1a">169.64</div>
<div class="g" style="right:1010px;top:607px;color:#1a1a1a">0.00</div>
<div class="g" style="right:920px;top:607px;color:#1a1a1a">190.00</div>
<div class="g" style="right:840px;top:607px;color:#1a1a1a">10.18</div>
<div class="g" style="right:760px;top:607px;color:#1a1a1a">10.18</div>
<div class="g" style="right:680px;top:607px;color:#1a1a1a">0.00</div>
<div class="g" style="right:600px;top:607px;color:#1a1a1a">0.00</div>
<div class="g" style="right:550px;top:607px;color:#1a1a1a">0.00</div>
<div class="g" style="left:1378px;top:607px">Yes</div>
<div class="g" style="left:1478px;top:607px">25-04-2023 09:56</div>
<div class="g" style="left:1578px;top:607px">admin</div>
<div class="g" style="right:1634px;top:629px;color:#1a1a1a">169</div>
<div class="g" style="left:298px;top:629px">SR232400011</div>
<div class="g" style="left:398px;top:629px">24-04-2023</div>
<div class="g" style="left:498px;top:629px">390</div>
<div class="g" style="left:598px;top:629px">veda patel</div>
<div class="g" style="right:1090px;top:629px;color:#1a1a1a">25.00</div>
<div class="g" style="right:1010px;top:629px;color:#1a1a1a">0.00</div>
<div class="g" style="right:920px;top:629px;color:#1a1a1a">28.00</div>
<div class="g" style="right:840px;top:629px;color:#1a1a1a">1.50</div>
<div class="g" style="right:760px;top:629px;color:#1a1a1a">1.50</div>
<div class="g" style="right:680px;top:629px;color:#1a1a1a">0.00</div>
<div class="g" style="right:600px;top:629px;color:#1a1a1a">0.00</div>
<div class="g" style="right:550px;top:629px;color:#1a1a1a">0.00</div>
<div class="g" style="left:1378px;top:629px">Yes</div>
<div class="g" style="left:1478px;top:629px">24-04-2023 18:22</div>
<div class="g" style="left:1578px;top:629px">admin</div>
<div class="g" style="right:1634px;top:651px;color:#1a1a1a">168</div>
<div class="g" style="left:298px;top:651px">SR232400010</div>
<div class="g" style="left:398px;top:651px">24-04-2023</div>
<div class="g" style="left:498px;top:651px">390</div>
<div class="g" style="left:598px;top:651px">veda patel</div>
<div class="g" style="right:1090px;top:651px;color:#1a1a1a">100.00</div>
<div class="g" style="right:1010px;top:651px;color:#1a1a1a">0.00</div>
<div class="g" style="right:920px;top:651px;color:#1a1a1a">112.00</div>
<div class="g" style="right:840px;top:651px;color:#1a1a1a">6.00</div>
<div class="g" style="right:760px;top:651px;color:#1a1a1a">6.00</div>
<div class="g" style="right:680px;top:651px;color:#1a1a1a">0.00</div>
<div class="g" style="right:600px;top:651px;color:#1a1a1a">0.00</div>
<div class="g" style="right:550px;top:651px;color:#1a1a1a">0.00</div>
<div class="g" style="left:1378px;top:651px">Yes</div>
<div class="g" style="left:1478px;top:651px">24-04-2023 18:16</div>
<div class="g" style="left:1578px;top:651px">admin</div>
<div class="g" style="right:1634px;top:673px;color:#1a1a1a">167</div>
<div class="g" style="left:298px;top:673px">SR232400009</div>
<div class="g" style="left:398px;top:673px">24-04-2023</div>
<div class="g" style="left:498px;top:673px">388</div>
<div class="g" style="left:598px;top:673px">Nidhi Garala</div>
<div class="g" style="right:1090px;top:673px;color:#1a1a1a">101.70</div>
<div class="g" style="right:1010px;top:673px;color:#1a1a1a">0.00</div>
<div class="g" style="right:920px;top:673px;color:#1a1a1a">117.00</div>
<div class="g" style="right:840px;top:673px;color:#1a1a1a">9.15</div>
<div class="g" style="right:760px;top:673px;color:#1a1a1a">9.15</div>
<div class="g" style="right:680px;top:673px;color:#1a1a1a">0.00</div>
<div class="g" style="right:600px;top:673px;color:#1a1a1a">3.00</div>
<div class="g" style="right:550px;top:673px;color:#1a1a1a">0.00</div>
<div class="g" style="left:1378px;top:673px">Yes</div>
<div class="g" style="left:1478px;top:673px">24-04-2023 17:37</div>
<div class="g" style="left:1578px;top:673px">admin</div>
<div class="g" style="right:1634px;top:695px;color:#1a1a1a">166</div>
<div class="g" style="left:298px;top:695px">SR232400008</div>
<div class="g" style="left:398px;top:695px">24-04-2023</div>
<div class="g" style="left:498px;top:695px">25</div>
<div class="g" style="left:598px;top:695px">nidhi</div>
<div class="g" style="right:1090px;top:695px;color:#1a1a1a">2.29</div>
<div class="g" style="right:1010px;top:695px;color:#1a1a1a">0.00</div>
<div class="g" style="right:920px;top:695px;color:#1a1a1a">2.00</div>
<div class="g" style="right:840px;top:695px;color:#1a1a1a">0.06</div>
<div class="g" style="right:760px;top:695px;color:#1a1a1a">0.06</div>
<div class="g" style="right:680px;top:695px;color:#1a1a1a">0.00</div>
<div class="g" style="right:600px;top:695px;color:#1a1a1a">0.00</div>
<div class="g" style="right:550px;top:695px;color:#1a1a1a">0.41</div>
<div class="g" style="left:1378px;top:695px">Yes</div>
<div class="g" style="left:1478px;top:695px">24-04-2023 17:18</div>
<div class="g" style="left:1578px;top:695px">admin</div>
<div class="g" style="right:1634px;top:717px;color:#1a1a1a">165</div>
<div class="g" style="left:298px;top:717px">SR232400007</div>
<div class="g" style="left:398px;top:717px">24-04-2023</div>
<div class="g" style="left:498px;top:717px">388</div>
<div class="g" style="left:598px;top:717px">Nidhi Garala</div>
<div class="g" style="right:1090px;top:717px;color:#1a1a1a">9.29</div>
<div class="g" style="right:1010px;top:717px;color:#1a1a1a">0.00</div>
<div class="g" style="right:920px;top:717px;color:#1a1a1a">10.00</div>
<div class="g" style="right:840px;top:717px;color:#1a1a1a">0.56</div>
<div class="g" style="right:760px;top:717px;color:#1a1a1a">0.56</div>
<div class="g" style="right:680px;top:717px;color:#1a1a1a">0.00</div>
<div class="g" style="right:600px;top:717px;color:#1a1a1a">0.00</div>
<div class="g" style="right:550px;top:717px;color:#1a1a1a">0.41</div>
<div class="g" style="left:1378px;top:717px">Yes</div>
<div class="g" style="left:1478px;top:717px">24-04-2023 17:17</div>
<div class="g" style="left:1578px;top:717px">admin</div>
<div class="g" style="right:1634px;top:739px;color:#1a1a1a">164</div>
<div class="g" style="left:298px;top:739px">SR232400006</div>
<div class="g" style="left:398px;top:739px">14-04-2023</div>
<div class="g" style="left:498px;top:739px">3</div>
<div class="g" style="left:598px;top:739px">Sejal</div>
<div class="g" style="right:1090px;top:739px;color:#1a1a1a">232.14</div>
<div class="g" style="right:1010px;top:739px;color:#1a1a1a">0.00</div>
<div class="g" style="right:920px;top:739px;color:#1a1a1a">260.00</div>
<div class="g" style="right:840px;top:739px;color:#1a1a1a">13.93</div>
<div class="g" style="right:760px;top:739px;color:#1a1a1a">13.93</div>
<div class="g" style="right:680px;top:739px;color:#1a1a1a">0.00</div>
<div class="g" style="right:600px;top:739px;color:#1a1a1a">0.00</div>
<div class="g" style="right:550px;top:739px;color:#1a1a1a">0.00</div>
<div class="g" style="left:1378px;top:739px">Yes</div>
<div class="g" style="left:1478px;top:739px">14-04-2023 16:28</div>
<div class="g" style="left:1578px;top:739px">admin</div>
<div class="g" style="right:1634px;top:761px;color:#1a1a1a">163</div>
<div class="g" style="left:298px;top:761px">SR232400005</div>
<div class="g" style="left:398px;top:761px">13-04-2023</div>
<div class="g" style="left:498px;top:761px">3</div>
<div class="g" style="left:598px;top:761px">Sejal</div>
<div class="g" style="right:1090px;top:761px;color:#1a1a1a">3,642.93</div>
<div class="g" style="right:1010px;top:761px;color:#1a1a1a">0.00</div>
<div class="g" style="right:920px;top:761px;color:#1a1a1a">3,825.00</div>
<div class="g" style="right:840px;top:761px;color:#1a1a1a">91.07</div>
<div class="g" style="right:760px;top:761px;color:#1a1a1a">91.07</div>
<div class="g" style="right:680px;top:761px;color:#1a1a1a">0.00</div>
<div class="g" style="right:600px;top:761px;color:#1a1a1a">0.00</div>
<div class="g" style="right:550px;top:761px;color:#1a1a1a">0.07</div>
<div class="g" style="left:1378px;top:761px">Yes</div>
<div class="g" style="left:1478px;top:761px">13-04-2023 10:16</div>
<div class="g" style="left:1578px;top:761px">admin</div>
<div class="g" style="right:1634px;top:783px;color:#1a1a1a">162</div>
<div class="g" style="left:298px;top:783px">SR232400004</div>
<div class="g" style="left:398px;top:783px">11-04-2023</div>
<div class="g" style="left:498px;top:783px">364</div>
<div class="g" style="left:598px;top:783px">Patient 1</div>
<div class="g" style="right:1090px;top:783px;color:#1a1a1a">2,190.50</div>
<div class="g" style="right:1010px;top:783px;color:#1a1a1a">0.00</div>
<div class="g" style="right:920px;top:783px;color:#1a1a1a">2,300.00</div>
<div class="g" style="right:840px;top:783px;color:#1a1a1a">54.76</div>
<div class="g" style="right:760px;top:783px;color:#1a1a1a">54.76</div>
<div class="g" style="right:680px;top:783px;color:#1a1a1a">0.00</div>
<div class="g" style="right:600px;top:783px;color:#1a1a1a">0.00</div>
<div class="g" style="right:550px;top:783px;color:#1a1a1a">0.02</div>
<div class="g" style="left:1378px;top:783px">Yes</div>
<div class="g" style="left:1478px;top:783px">11-04-2023 11:22</div>
<div class="g" style="left:1578px;top:783px">admin</div>
<div class="g" style="right:1634px;top:805px;color:#1a1a1a">161</div>
<div class="g" style="left:298px;top:805px">SR232400003</div>
<div class="g" style="left:398px;top:805px">10-04-2023</div>
<div class="g" style="left:498px;top:805px">364</div>
<div class="g" style="left:598px;top:805px">Patient 1</div>
<div class="g" style="right:1090px;top:805px;color:#1a1a1a">76.27</div>
<div class="g" style="right:1010px;top:805px;color:#1a1a1a">0.00</div>
<div class="g" style="right:920px;top:805px;color:#1a1a1a">90.00</div>
<div class="g" style="right:840px;top:805px;color:#1a1a1a">6.86</div>
<div class="g" style="right:760px;top:805px;color:#1a1a1a">6.86</div>
<div class="g" style="right:680px;top:805px;color:#1a1a1a">0.00</div>
<div class="g" style="right:600px;top:805px;color:#1a1a1a">0.00</div>
<div class="g" style="right:550px;top:805px;color:#1a1a1a">0.01</div>
<div class="g" style="left:1378px;top:805px">Yes</div>
<div class="g" style="left:1478px;top:805px">10-04-2023 18:33</div>
<div class="g" style="left:1578px;top:805px">admin</div>
<div class="g" style="right:1634px;top:827px;color:#1a1a1a">160</div>
<div class="g" style="left:298px;top:827px">SR232400002</div>
<div class="g" style="left:398px;top:827px">10-04-2023</div>
<div class="g" style="left:498px;top:827px">364</div>
<div class="g" style="left:598px;top:827px">Patient 1</div>
<div class="g" style="right:1090px;top:827px;color:#1a1a1a">26.67</div>
<div class="g" style="right:1010px;top:827px;color:#1a1a1a">0.00</div>
<div class="g" style="right:920px;top:827px;color:#1a1a1a">28.00</div>
<div class="g" style="right:840px;top:827px;color:#1a1a1a">0.67</div>
<div class="g" style="right:760px;top:827px;color:#1a1a1a">0.67</div>
<div class="g" style="right:680px;top:827px;color:#1a1a1a">0.00</div>
<div class="g" style="right:600px;top:827px;color:#1a1a1a">0.00</div>
<div class="g" style="right:550px;top:827px;color:#1a1a1a">0.01</div>
<div class="g" style="left:1378px;top:827px">Yes</div>
<div class="g" style="left:1478px;top:827px">10-04-2023 10:08</div>
<div class="g" style="left:1578px;top:827px">admin</div>
<div class="g" style="right:1634px;top:849px;color:#1a1a1a">159</div>
<div class="g" style="left:298px;top:849px">SR232400001</div>
<div class="g" style="left:398px;top:849px">07-04-2023</div>
<div class="g" style="left:498px;top:849px">364</div>
<div class="g" style="left:598px;top:849px">Patient 1</div>
<div class="g" style="right:1090px;top:849px;color:#1a1a1a">12.38</div>
<div class="g" style="right:1010px;top:849px;color:#1a1a1a">0.00</div>
<div class="g" style="right:920px;top:849px;color:#1a1a1a">13.00</div>
<div class="g" style="right:840px;top:849px;color:#1a1a1a">0.31</div>
<div class="g" style="right:760px;top:849px;color:#1a1a1a">0.31</div>
<div class="g" style="right:680px;top:849px;color:#1a1a1a">0.00</div>
<div class="g" style="right:600px;top:849px;color:#1a1a1a">0.00</div>
<div class="g" style="right:550px;top:849px;color:#1a1a1a">0.00</div>
<div class="g" style="left:1378px;top:849px">Yes</div>
<div class="g" style="left:1478px;top:849px">07-04-2023 10:15</div>
<div class="g" style="left:1578px;top:849px">admin</div>
<div class="g" style="right:1635px;margin-right:0;top:252px;color:#1a1a1a;letter-spacing:-0.1px">Sr</div>
<div class="g" style="left:300px;top:252px;color:#1a1a1a;letter-spacing:-0.1px">Bill No</div>
<div class="g" style="left:400px;top:252px;color:#1a1a1a;letter-spacing:-0.1px">Bill Date</div>
<div class="g" style="left:500px;top:252px;color:#1a1a1a;letter-spacing:-0.1px">Patient Id</div>
<div class="g" style="left:600px;top:252px;color:#1a1a1a;letter-spacing:-0.1px">Patient Name</div>
<div class="g" style="left:750px;top:252px;color:#1a1a1a;letter-spacing:-0.1px">Gross Amt</div>
<div class="g" style="left:841px;top:252px;color:#1a1a1a;letter-spacing:-0.1px">Disc Amt</div>
<div class="g" style="left:935px;top:252px;color:#1a1a1a;letter-spacing:-0.1px">Amount</div>
<div class="g" style="right:841px;margin-right:0;top:252px;color:#1a1a1a;letter-spacing:-0.1px">SGST Amt</div>
<div class="g" style="right:762px;margin-right:0;top:252px;color:#1a1a1a;letter-spacing:-0.1px">CGST Amt</div>
<div class="g" style="left:1170px;top:252px;color:#1a1a1a;letter-spacing:-0.1px">IGST Amt</div>
<div class="g" style="right:552px;margin-right:0;top:252px;color:#1a1a1a;letter-spacing:-0.1px">Roff</div>
<div class="g" style="left:1396px;top:252px;color:#1a1a1a;letter-spacing:-0.1px">Is Sync</div>
<div class="g" style="left:1485px;top:252px;color:#1a1a1a;letter-spacing:-0.1px">Created On</div>
<div class="g" style="left:1586px;top:252px;color:#1a1a1a;letter-spacing:-0.1px">Created By</div>
<div class="g" style="right:602px;top:247px;color:#1a1a1a">Cash Disc</div>
<div class="a" style="left:1245px;top:243px;width:79px;height:28px;overflow:hidden"><div class="g" style="right:6px;top:18px;color:#1a1a1a">Amt</div></div>
<div class="a" style="left:724px;top:968px;width:85px;height:25px;border:1px solid #7e7e7e;background:#fff"></div>
<div class="t" style="left:755px;margin-left:0;top:974px;font-size:13px;color:#1a1a1a"><u>A</u>dd</div>
<div class="a" style="left:812px;top:968px;width:85px;height:25px;border:1px solid #7e7e7e;background:#fff"></div>
<div class="t" style="left:844px;margin-left:0;top:974px;font-size:13px;color:#8a8a8a"><u>E</u>dit</div>
<div class="a" style="left:900px;top:968px;width:85px;height:25px;border:2px solid #1e1e1e;background:#fff"></div>
<div class="t" style="left:925px;margin-left:0;top:974px;font-size:13px;color:#1a1a1a"><u>D</u>elete</div>
<div class="a" style="left:988px;top:968px;width:85px;height:25px;border:1px solid #7e7e7e;background:#fff"></div>
<div class="t" style="left:1016px;margin-left:0;top:974px;font-size:13px;color:#1a1a1a"><u>V</u>iew</div>
<div class="a" style="left:1076px;top:968px;width:81px;height:25px;border:1px solid #7e7e7e;background:#fff"></div>
<div class="t" style="left:1122px;margin-left:0;top:974px;font-size:13px;color:#1a1a1a"><u>P</u>rint</div>
<div class="a" style="left:1160px;top:968px;width:81px;height:25px;border:1px solid #7e7e7e;background:#fff"></div>
<div class="t" style="left:1186px;margin-left:0;top:974px;font-size:13px;color:#1a1a1a">Print <u>L</u>ist</div>
<div class="a" style="left:1244px;top:968px;width:182px;height:25px;background:#d4d4d4"></div>
<div class="t" style="left:1253px;top:975px;font-size:12.5px;color:#1a1a1a;letter-spacing:-0.2px">Credit/Debit Note/Sales Return</div>
<svg class="a" style="left:729px;top:972px" width="18" height="18" viewBox="0 0 18 18"><circle cx="9" cy="9" r="7.2" fill="#5cbd5c" stroke="#3d9a3d" stroke-width="1"/><circle cx="9" cy="9" r="5" fill="#7ed37a"/><path d="M9 5v8M5 9h8" stroke="#fff" stroke-width="2.2"/></svg>
<svg class="a" style="left:817px;top:972px" width="16" height="18" viewBox="0 0 16 18"><path d="M1.5 1.5h8l3.5 3.5v11.5h-11.5z" fill="#e3e3e3" stroke="#c2c2c2"/><path d="M6 14l6-6 1.5 1.5-6 6z" fill="#bdbdbd"/></svg>
<svg class="a" style="left:906px;top:971px" width="18" height="20" viewBox="0 0 18 20"><path d="M6 2.5h6M2.5 4.5h13" stroke="#777" stroke-width="1.6"/><path d="M3.5 6h11l-1 12.5h-9z" fill="#9a9a9a" stroke="#6f6f6f" stroke-width="0.8"/><path d="M6.5 7.5v9.5M9 7.5v9.5M11.5 7.5v9.5" stroke="#d0d0d0" stroke-width="0.9"/></svg>
<svg class="a" style="left:994px;top:973px" width="18" height="16" viewBox="0 0 18 16"><g fill="#333"><circle cx="2" cy="2" r="1.4"/><circle cx="2" cy="8" r="1.4"/><circle cx="2" cy="14" r="1.4"/><rect x="6" y="1.4" width="10.5" height="1.2"/><rect x="6" y="7.4" width="10.5" height="1.2"/><rect x="6" y="13.4" width="10.5" height="1.2"/></g></svg>
<svg class="a" style="left:1081px;top:972px" width="18" height="17" viewBox="0 0 18 17"><rect x="4.5" y="1" width="9" height="5" fill="#f4f4f4" stroke="#7a7a7a" stroke-width="0.9"/><rect x="1" y="5.5" width="16" height="7" rx="1.5" fill="#a9a9a9" stroke="#6d6d6d" stroke-width="0.9"/><rect x="4.5" y="10.5" width="9" height="5.5" fill="#f4f4f4" stroke="#7a7a7a" stroke-width="0.9"/></svg>
<svg class="a" style="left:1165px;top:972px" width="18" height="17" viewBox="0 0 18 17"><rect x="4.5" y="1" width="9" height="5" fill="#f4f4f4" stroke="#7a7a7a" stroke-width="0.9"/><rect x="1" y="5.5" width="16" height="7" rx="1.5" fill="#a9a9a9" stroke="#6d6d6d" stroke-width="0.9"/><rect x="4.5" y="10.5" width="9" height="5.5" fill="#f4f4f4" stroke="#7a7a7a" stroke-width="0.9"/></svg>
<svg class="a" style="left:20px;top:915px" width="170" height="90" viewBox="20 915 170 90">
<path d="M30.2 997.6A73.8 73.8 0 0 1 177.8 997.6" fill="none" stroke="#b4b4b4" stroke-width="5.6"/>
<path d="M33 997.6A71 71 0 0 1 175 997.6L144.2 997.6A40.2 40.2 0 0 0 63.8 997.6Z" fill="#fff"/>
<path d="M154.2 947.4A71 71 0 0 1 175 997.6L144.2 997.6A40.2 40.2 0 0 0 132.4 969.2Z" fill="#cf1f26"/>
<path d="M104 926.6V957.4M53.8 947.4L75.6 969.2" stroke="#7d7d7d" stroke-width="0.7"/>
<path d="M63.8 997.6A40.2 40.2 0 0 1 144.2 997.6" fill="#fdeeea" stroke="#a99e9c" stroke-width="0.7"/>
<path d="M80 997.6A24 24 0 0 1 128 997.6Z" fill="#ececec"/>
<path d="M82.6 997.6A21.4 21.4 0 0 1 125.4 997.6Z" fill="#b3b3b3"/>
<path d="M104 996.2L145 996.9L145 997.9L104 999Z" fill="#3a3a3a"/><circle cx="104" cy="997.4" r="3" fill="#3a3a3a"/>
<text x="0" y="0" font-family="Liberation Sans" font-size="8" font-weight="bold" fill="#fff" transform="translate(146 960) rotate(64)">High Risk</text>
</svg>
<div class="t" style="left:43px;top:1005px;font-size:11px;font-weight:bold;color:#6b3b3b;letter-spacing:-0.15px">Database Backup Status</div>
<div class="a" style="left:0;top:1018px;width:1920px;height:22px;background:#fdebe7"></div>
<div class="t" style="left:112px;margin-left:0;top:1024px;font-size:12px;font-weight:bold;color:#6e3434;letter-spacing:-0.2px">admin (App. Version : 1.38.0)</div>
<div class="t" style="left:539px;margin-left:0;top:1024px;font-size:12px;font-weight:bold;color:#6e3434;letter-spacing:-0.2px">28-04-2023</div>
<div class="t" style="left:919px;margin-left:0;top:1024px;font-size:12px;font-weight:bold;color:#6e3434;letter-spacing:-0.2px">07:51:59 PM</div>
<div class="t" style="left:1243px;margin-left:0;top:1024px;font-size:12px;font-weight:bold;color:#6e3434;letter-spacing:-0.2px">Last Login : 28-04-2023 19:41:27</div>
<div class="t" style="left:1611px;margin-left:0;top:1024px;font-size:12px;font-weight:bold;color:#6e3434;letter-spacing:-0.2px">Last Sync Time : 28-04-2023 19:46:32</div>
<div class="a" style="left:847px;top:471px;width:242px;height:152px;border:1px solid #9a9a9a;background:#fff;box-shadow:0 0 10px 2px rgba(0,0,0,0.28)"></div>
<div class="a" style="left:848px;top:580px;width:240px;height:42px;background:#f0f0f0"></div>
<div class="t" style="left:856px;margin-left:0;top:481px;font-size:12px;color:#8c8c8c">POS Message</div>
<svg class="a" style="left:1067px;top:480px" width="12" height="12" viewBox="0 0 12 12"><path d="M0.8 0.8L11.2 11.2M11.2 0.8L0.8 11.2" stroke="#777" stroke-width="1"/></svg>
<svg class="a" style="left:870px;top:526px" width="30" height="30" viewBox="0 0 30 30"><circle cx="15" cy="15" r="15" fill="#0f6cc6"/><circle cx="15" cy="7.3" r="1.4" fill="#fff"/><rect x="14.1" y="11" width="1.8" height="12" fill="#fff"/></svg>
<div class="t" style="left:910px;top:537px;font-size:11px;color:#111;letter-spacing:0.2px">You can't delete Sales Retrun</div>
<div class="a" style="left:999px;top:591px;width:73px;height:21px;border:1px solid #adadad;background:#e1e1e1"></div>
<div class="t" style="left:1028px;top:596px;font-size:12px;color:#111">OK</div>
<div class="a" style="left:0;top:1040px;width:1920px;height:40px;background:#444"></div>
<svg class="a" style="left:16px;top:1052px" width="17" height="17" viewBox="0 0 17 17"><path d="M0 2.3L6.8 1.3V7.8H0Z M7.8 1.2L16.4 0V7.8H7.8Z M0 8.8H6.8V15.4L0 14.4Z M7.8 8.8H16.4V16.6L7.8 15.5Z" fill="#fff"/></svg>
<div class="a" style="left:48px;top:1040px;width:288px;height:40px;background:#f0f0f0;border-top:1px solid #c4c4c4"></div>
<svg class="a" style="left:59px;top:1051px" width="19" height="19" viewBox="0 0 19 19"><circle cx="11.5" cy="7.2" r="5.3" fill="none" stroke="#111" stroke-width="1.1"/><path d="M7.7 11L1.2 17.6" stroke="#111" stroke-width="1.2"/></svg>
<div class="t" style="left:88px;margin-left:0;top:1053px;font-size:14px;color:#1b1b1b">Type here to search</div>
<svg class="a" style="left:266px;top:1041px" width="70" height="39" viewBox="0 0 70 39">
<path d="M8 8Q20 16 30 24T58 38" stroke="#a89878" stroke-width="2.4" fill="none"/>
<path d="M50 39Q62 32 70 33V39Z" fill="#b5a27a"/>
<g fill="#e8d040"><ellipse cx="14" cy="7" rx="6" ry="4"/><ellipse cx="29" cy="7" rx="4" ry="5.5"/><ellipse cx="17" cy="19" rx="7" ry="5"/><ellipse cx="31" cy="28" rx="7" ry="5"/><ellipse cx="41" cy="14" rx="5" ry="7"/><ellipse cx="55" cy="19" rx="6" ry="10"/></g>
<g fill="#d8d070" opacity=".6"><circle cx="37" cy="5" r="2"/><circle cx="66" cy="14" r="2"/><circle cx="69" cy="20" r="3"/><circle cx="15" cy="27" r="1.5"/><circle cx="18" cy="33" r="2"/></g>
</svg>
<svg class="a" style="left:351px;top:1051px" width="18" height="17" viewBox="0 0 18 17"><path d="M1 1.5h9M1 15.5h9M1.5 4.5v8h8v-8z" fill="none" stroke="#fff" stroke-width="1.2"/><path d="M14.5 1v3M14.5 7v9" stroke="#fff" stroke-width="1.2"/><rect x="13" y="4.5" width="3" height="3" fill="#fff"/></svg>
<svg class="a" style="left:398px;top:1048px" width="26" height="25" viewBox="0 0 26 25"><defs><linearGradient id="eg" x1="0" y1="1" x2="1" y2="0"><stop offset="0" stop-color="#0b52a8"/><stop offset=".5" stop-color="#1a8be0"/><stop offset=".75" stop-color="#35bcd8"/><stop offset="1" stop-color="#5ad67a"/></linearGradient></defs>
<circle cx="13" cy="12.5" r="12" fill="url(#eg)"/><path d="M2 15C3 8 9 6 14 8C18 10 19 14 16 15C13 16 10 14 11 12C8 13 8 19 13 22C7 23 3 20 2 15Z" fill="#0f5bb0" opacity=".85"/><circle cx="13" cy="13" r="2.2" fill="#0d4d96"/></svg>
<svg class="a" style="left:448px;top:1050px" width="24" height="20" viewBox="0 0 24 20"><path d="M1 1.5h7.5l2 2H22v2H1Z" fill="#e0a82a"/><rect x="1" y="4.5" width="21.5" height="14" fill="#fbd35c"/><path d="M5 12h13v7h-3v-3.5H8V19H5Z" fill="#3d8fd6"/><rect x="8" y="15.5" width="7" height="3.5" fill="#f7cc55"/></svg>
<svg class="a" style="left:496px;top:1049px" width="26" height="23" viewBox="0 0 26 23"><path d="M1 8L13 0.5 25 8V22.5H1Z" fill="#0b5cb8"/><path d="M1 8H25L13 16Z" fill="#eef6ff"/><path d="M1 8L13 16 25 8V22.5H1Z" fill="#2f9ee8"/><path d="M1 22.5L11 12.5 25 22.5Z" fill="#46b4f0"/><path d="M25 8V22.5L15 14Z" fill="#36c0f5"/></svg>
<svg class="a" style="left:545px;top:1048px" width="25" height="25" viewBox="0 0 25 25"><path d="M7.5 6V3.5A2 2 0 0 1 9.5 1.5h6A2 2 0 0 1 17.5 3.5V6" fill="none" stroke="#2aa0d8" stroke-width="1.8"/><rect x="1" y="5.5" width="23" height="18.5" rx="3" fill="#f4f4f4"/><rect x="7.5" y="9.5" width="4.5" height="4.5" fill="#f25022"/><rect x="13" y="9.5" width="4.5" height="4.5" fill="#7fba00"/><rect x="7.5" y="15" width="4.5" height="4.5" fill="#00a4ef"/><rect x="13" y="15" width="4.5" height="4.5" fill="#ffb900"/></svg>
<svg class="a" style="left:594px;top:1048px" width="25" height="25" viewBox="0 0 25 25"><circle cx="12.5" cy="12.5" r="12" fill="#fbc02d"/><path d="M12.5 0.5A12 12 0 0 1 22.9 6.5H12.5A6 6 0 0 0 7.3 9.5L2.1 6.5A12 12 0 0 1 12.5 0.5Z" fill="#e53935"/><path d="M2.1 6.5L7.3 15.5A6 6 0 0 0 12.5 18.5L7.3 24A12 12 0 0 1 2.1 6.5Z" fill="#43a047"/><circle cx="12.5" cy="12.5" r="5.5" fill="#fff"/><circle cx="12.5" cy="12.5" r="4.3" fill="#1e88e5"/></svg>
<div class="a" style="left:632px;top:1040px;width:48px;height:40px;background:#a56c3c"></div>
<div class="a" style="left:632px;top:1078px;width:48px;height:2px;background:#f07a28"></div>
<svg class="a" style="left:645px;top:1049px" width="23" height="22" viewBox="0 0 23 22"><rect x="1" y="1" width="21.5" height="21" rx="1" fill="#fcd116"/><path d="M22.5 11.5V22H12Z" fill="#2e2e2e"/></svg>
<svg class="a" style="left:693px;top:1049px" width="24" height="23" viewBox="0 0 24 23"><circle cx="7" cy="7" r="6.5" fill="#0a8fe0"/><circle cx="17" cy="16" r="6.5" fill="#0a8fe0"/><circle cx="12" cy="11.5" r="10" fill="#14a2ef"/><text x="12" y="17" font-family="Liberation Sans" font-weight="bold" font-size="15" fill="#fff" text-anchor="middle">S</text></svg>
<svg class="a" style="left:742px;top:1049px" width="24" height="23" viewBox="0 0 24 23"><rect x="9" y="1.5" width="14" height="20" fill="#fff" stroke="#1d7a45" stroke-width="1"/><path d="M12 6h10M12 9.5h10M12 13h10M12 16.5h10M16 2v19" stroke="#1d7a45" stroke-width="0.8"/><path d="M0.5 2.5L13 0.5V22.5L0.5 20.5Z" fill="#1e7b46"/><text x="6.6" y="16" font-family="Liberation Sans" font-weight="bold" font-size="11" fill="#fff" text-anchor="middle">X</text></svg>
<svg class="a" style="left:790px;top:1049px" width="25" height="23" viewBox="0 0 25 23"><path d="M1 17L10 1.5H23.5L20.5 19.5L7 22Z" fill="#8fc4d8"/><path d="M3 16.5L11 3H22L19 18.5Z" fill="#dff1f7"/><path d="M7 22L20.5 19.5 23.5 1.5 21 18Z" fill="#4f8aa8"/></svg>
<svg class="a" style="left:839px;top:1049px" width="25" height="23" viewBox="0 0 25 23"><path d="M1.5 10.5H8M3 10V13A9.5 8 0 0 0 22 13V9.5" fill="none" stroke="#ea5d22" stroke-width="3"/><path d="M11 16L18.5 3" stroke="#4a6a2a" stroke-width="2.2" stroke-linecap="round" opacity=".8"/></svg>
<div class="a" style="left:440px;top:1078px;width:40px;height:2px;background:#77b6e8"></div>
<div class="a" style="left:587px;top:1078px;width:40px;height:2px;background:#77b6e8"></div>
<div class="a" style="left:685px;top:1078px;width:40px;height:2px;background:#77b6e8"></div>
<div class="a" style="left:734px;top:1078px;width:40px;height:2px;background:#77b6e8"></div>
<div class="a" style="left:783px;top:1078px;width:40px;height:2px;background:#77b6e8"></div>
<div class="a" style="left:832px;top:1078px;width:40px;height:2px;background:#77b6e8"></div>
<svg class="a" style="left:1488px;top:1048px" width="28" height="24" viewBox="0 0 28 24"><path d="M13 1.5A6 6 0 1 0 19 9.5A5 5 0 0 1 13 1.5Z" fill="#f5b62a"/><path d="M4 23A5 5 0 0 1 3.5 13A7 7 0 0 1 16.5 12A5.5 5.5 0 0 1 22 23Z" fill="#b8d3ee"/></svg>
<div class="t" style="left:1522px;top:1053px;font-size:14.5px;color:#fff">36°C</div>
<div class="t" style="left:1560px;top:1053px;font-size:14.5px;color:#fff">Mostly cloudy</div>
<svg class="a" style="left:1670px;top:1055px" width="14" height="9" viewBox="0 0 14 9"><path d="M1 8L7 2 13 8" fill="none" stroke="#fff" stroke-width="1.3"/></svg>
<svg class="a" style="left:1691px;top:1056px" width="19" height="11" viewBox="0 0 19 11"><path d="M3.5 10.5A3.2 3.2 0 0 1 3.3 4.2A5 5 0 0 1 12.5 3A4 4 0 0 1 15.5 10.5Z" fill="#e6e6e6"/></svg>
<svg class="a" style="left:1716px;top:1053px" width="19" height="17" viewBox="0 0 19 17"><rect x="5.5" y="1.5" width="12.5" height="9" fill="none" stroke="#fff" stroke-width="1.1"/><path d="M11.5 10.5v3.5M7 14.5h9M1 2v8h3" fill="none" stroke="#fff" stroke-width="1.1"/><rect x="1" y="3" width="3" height="3" fill="#fff"/></svg>
<svg class="a" style="left:1740px;top:1053px" width="18" height="17" viewBox="0 0 18 17"><path d="M1.5 6H4.5L8.5 2V15L4.5 11H1.5Z" fill="none" stroke="#fff" stroke-width="1.1"/><path d="M11 6A3 3 0 0 1 11 11M13 4A6 6 0 0 1 13 13M15 2A9 9 0 0 1 15 15" fill="none" stroke="#fff" stroke-width="1.1"/></svg>
<div class="t" style="left:1767px;top:1054px;font-size:12px;color:#fff">ENG</div>
<div class="t" style="left:1819px;top:1044px;font-size:11.5px;color:#fff">19:51</div>
<div class="t" style="left:1803px;top:1062px;font-size:11.5px;color:#fff">28-04-2023</div>
<svg class="a" style="left:1877px;top:1051px" width="26" height="25" viewBox="0 0 26 25"><path d="M1.5 1.5h17v11h-9l-4 4v-4h-4z" fill="#fff"/><path d="M4 4.5h12M4 7h12M4 9.5h8" stroke="#444" stroke-width="1"/><circle cx="17" cy="16.5" r="7" fill="#444" stroke="#fff" stroke-width="1.1"/><text x="17" y="20.5" font-family="Liberation Sans" font-size="10" fill="#fff" text-anchor="middle">11</text></svg>
<div class="a" style="left:1915px;top:1040px;width:1px;height:40px;background:#8a8a8a"></div>
</body></html>
